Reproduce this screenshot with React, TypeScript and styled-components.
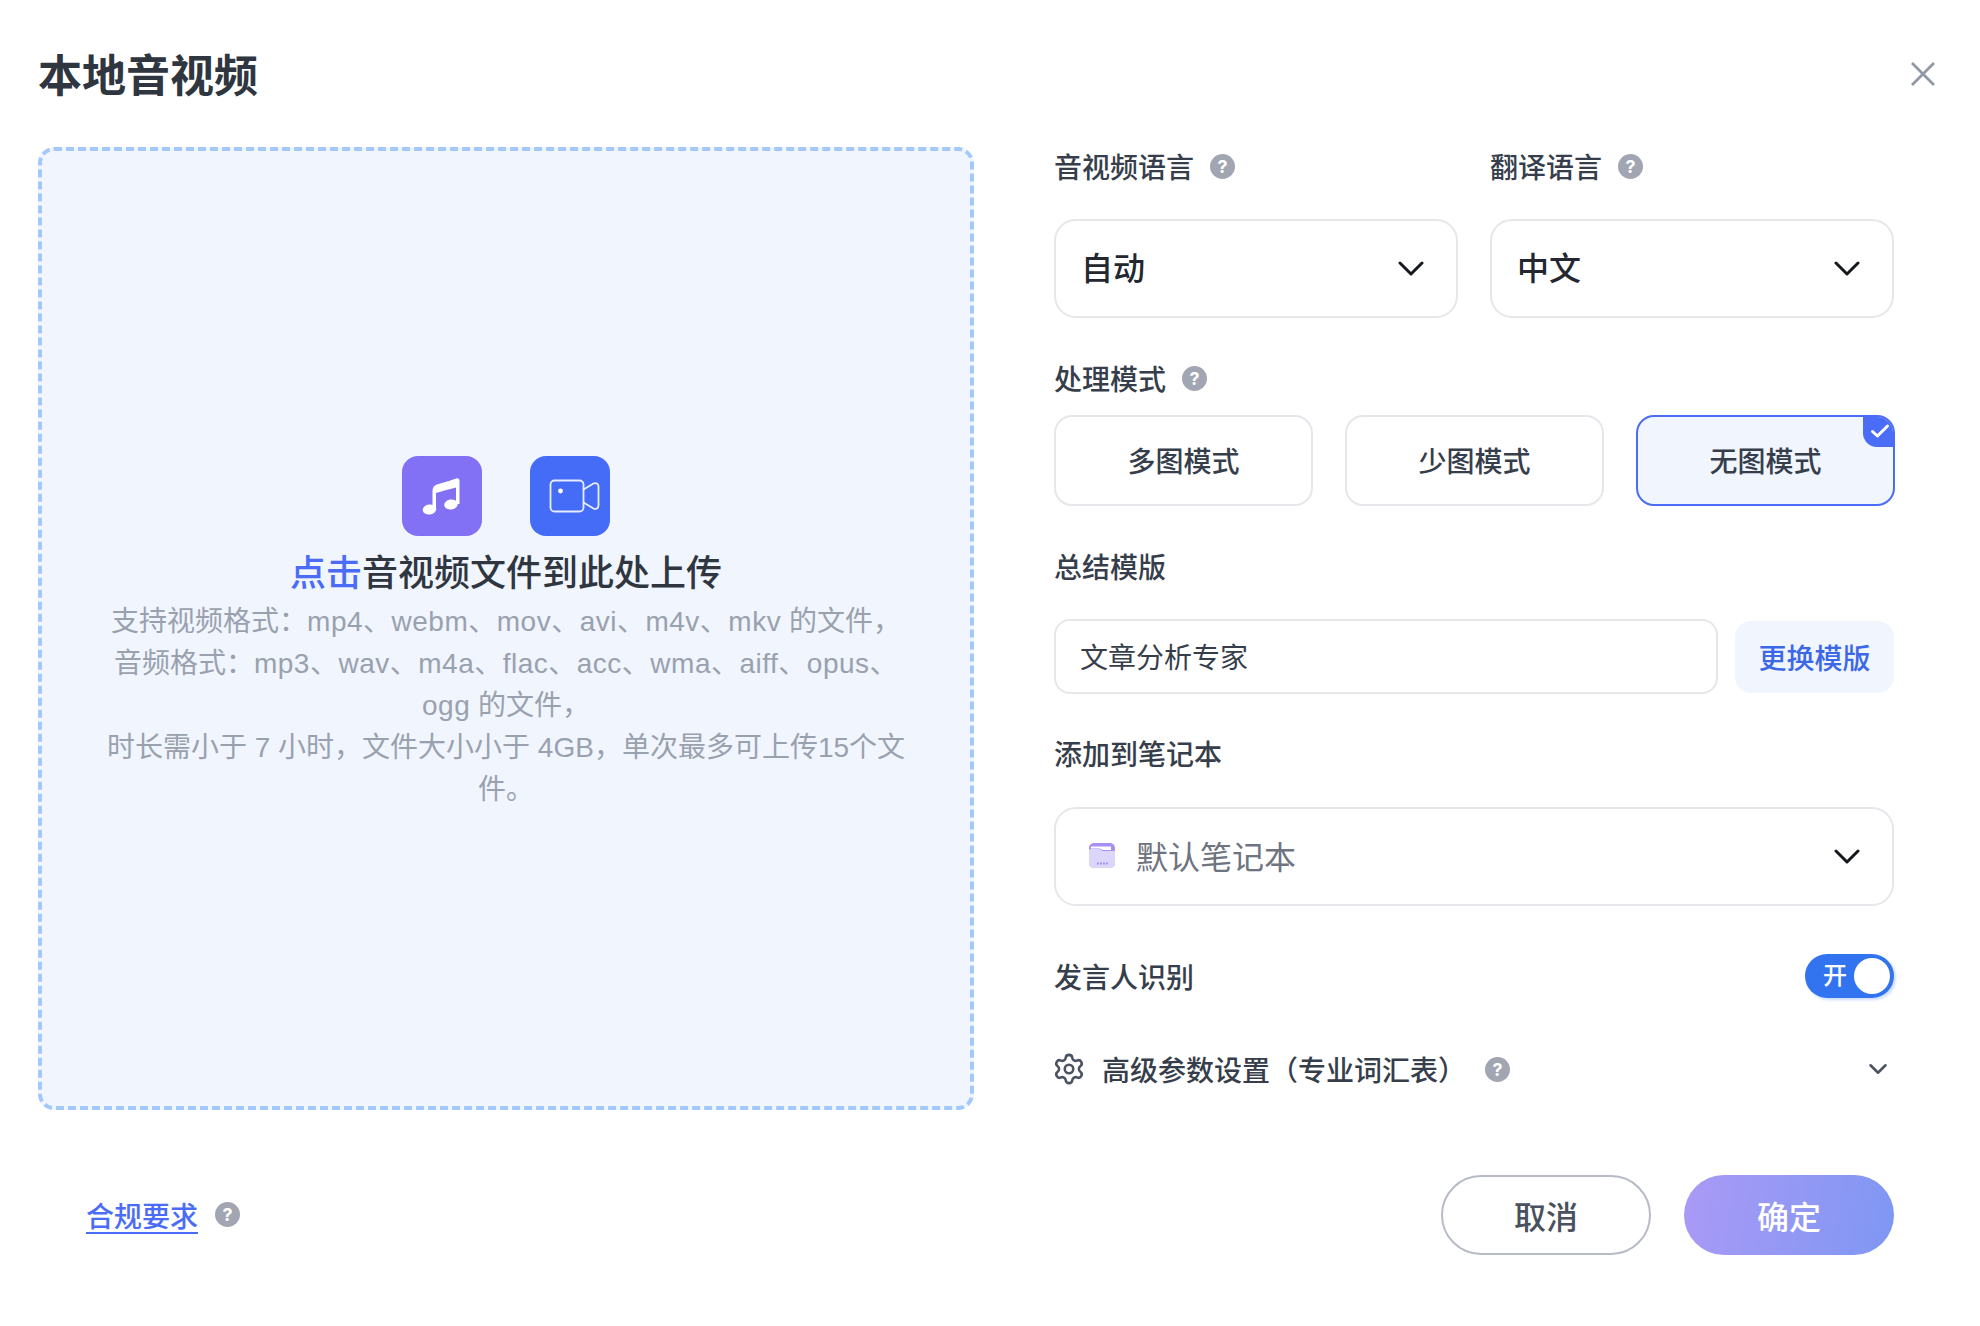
import styled, { createGlobalStyle } from "styled-components";
import { ChevronDown, Settings } from "lucide-react";

const GlobalStyle = createGlobalStyle`
  html, body {
    margin: 0;
    padding: 0;
    background: #fff;
  }
  body {
    font-family: Inter, "Noto Sans CJK SC", sans-serif;
    color: #2f3542;
  }
  * {
    box-sizing: border-box;
  }
`;

const Page = styled.div`
  width: 1980px;
  height: 1326px;
  padding-left: 38px;
  overflow: hidden;
`;

const Header = styled.div`
  height: 147px;
  padding: 0 44px 0 0;
  display: flex;
  justify-content: space-between;
  align-items: center;
`;

const Title = styled.h1`
  margin: 5px 0 0;
  font-size: 44px;
  font-weight: 700;
  line-height: 60px;
  color: #2f3640;
`;

const CloseIcon = styled.svg`
  width: 26px;
  height: 26px;
  margin-top: 1px;
  stroke: #9198a5;
  stroke-width: 2.8;
  fill: none;
`;

const Body = styled.div`
  display: flex;
  width: 1856px;
  gap: 80px;
`;

const DropZone = styled.div`
  width: 936px;
  height: 963px;
  border: 4px dashed #a3c9fb;
  border-radius: 16px;
  background: #f0f5fe;
  padding-top: 305px;
  display: flex;
  flex-direction: column;
  align-items: center;
`;

const UploadIcons = styled.div`
  display: flex;
  gap: 48px;
`;

const UploadIcon = styled.div<{ $bg: string }>`
  width: 80px;
  height: 80px;
  border-radius: 16px;
  background: ${(p) => p.$bg};
`;

const Headline = styled.div`
  font-size: 36px;
  font-weight: 500;
  line-height: 50px;
  margin-top: 12px;
  color: #2f3640;
`;

const Accent = styled.span`
  color: #4a6cf7;
`;

const Hint = styled.div`
  margin-top: 3px;
  font-family: "Liberation Sans", "Noto Sans CJK SC", sans-serif;
  font-size: 28px;
  line-height: 42px;
  color: #9aa1ae;
  text-align: center;
  width: 808px;
`;

const Formats = styled.span`
  letter-spacing: 0.5px;
`;

const Side = styled.div`
  width: 840px;
  display: flex;
  flex-direction: column;
`;

const Columns = styled.div`
  display: grid;
  grid-template-columns: 404px 404px;
  gap: 32px;
`;

const Label = styled.div<{ $top?: number; $bottom?: number }>`
  display: flex;
  align-items: center;
  height: 38px;
  font-size: 28px;
  font-weight: 500;
  color: #373e4b;
  margin-top: ${(p) => p.$top ?? 0}px;
  margin-bottom: ${(p) => p.$bottom ?? 0}px;
`;

const Help = styled.span<{ $gap?: number }>`
  width: 25px;
  height: 25px;
  margin-left: ${(p) => p.$gap ?? 16}px;
  border-radius: 50%;
  background: #a2a6b2;
  color: #fff;
  font-size: 18px;
  font-weight: 700;
  line-height: 25px;
  text-align: center;
  flex: none;
`;

const Select = styled.div`
  height: 99px;
  border: 2.5px solid #e6e7eb;
  border-radius: 22px;
  padding: 0 25px;
  display: flex;
  align-items: center;
  justify-content: space-between;
  font-size: 32px;
  font-weight: 500;
  color: #23272f;
  background: #fff;
`;

const SelectValue = styled.span`
  margin-bottom: 5px;
`;

const ChevronIcon = styled.svg`
  width: 26px;
  height: 15px;
  margin-right: 7px;
  fill: none;
  stroke: #15181d;
  stroke-width: 3;
  stroke-linecap: round;
  stroke-linejoin: round;
`;

const Chevron = () => (
  <ChevronIcon viewBox="0 0 26 15">
    <path d="M2 2 13 13 24 2" />
  </ChevronIcon>
);

const ModeRow = styled.div`
  display: grid;
  grid-template-columns: repeat(3, 259px);
  gap: 32px;
`;

const ModeCard = styled.div<{ $active?: boolean }>`
  position: relative;
  height: 91px;
  padding-bottom: 2px;
  border: 2.5px solid ${(p) => (p.$active ? "#4a6cf7" : "#e6e7eb")};
  border-radius: 18px;
  background: ${(p) => (p.$active ? "#f0f5fe" : "#fff")};
  font-size: 28px;
  font-weight: 500;
  color: #373e4b;
  display: flex;
  align-items: center;
  justify-content: center;
  overflow: hidden;
`;

const CheckBadge = styled.span`
  position: absolute;
  top: -3px;
  right: -3px;
  width: 33px;
  height: 33px;
  background: #4a6cf7;
  border-bottom-left-radius: 14px;
  display: flex;
  align-items: center;
  justify-content: center;
`;

const TemplateRow = styled.div`
  display: flex;
  align-items: center;
  gap: 17px;
`;

const TemplateInput = styled.div`
  width: 664px;
  height: 75px;
  border: 2.5px solid #e6e7eb;
  border-radius: 16px;
  padding: 0 24px 2px;
  display: flex;
  align-items: center;
  font-size: 28px;
  color: #373e4b;
`;

const TemplateButton = styled.div`
  width: 159px;
  height: 72px;
  border-radius: 16px;
  background: #f0f5fe;
  color: #3c68e8;
  font-size: 28px;
  font-weight: 500;
  display: flex;
  align-items: center;
  justify-content: center;
`;

const NotebookName = styled.div`
  display: flex;
  align-items: center;
  gap: 20px;
  color: #6e7480;
  font-weight: 400;
  margin: 0 0 3px 7px;
`;

const SpeakerRow = styled.div`
  display: flex;
  align-items: center;
  justify-content: space-between;
  height: 44px;
  margin-top: 48px;
  font-size: 28px;
  font-weight: 500;
  color: #373e4b;
`;

const Toggle = styled.div`
  position: relative;
  width: 89px;
  height: 44px;
  border-radius: 22px;
  background: #3274f0;
  color: #fff;
  font-size: 24px;
  line-height: 44px;
  padding-left: 18px;
  box-shadow: 2px 2px 3px rgba(50, 116, 240, 0.25);
`;

const Knob = styled.span`
  position: absolute;
  top: 4px;
  right: 4px;
  width: 36px;
  height: 36px;
  border-radius: 50%;
  background: #fff;
`;

const AdvancedRow = styled.div`
  display: flex;
  align-items: center;
  height: 38px;
  margin-top: 52px;
  font-size: 28px;
  font-weight: 500;
  color: #373e4b;
`;

const Gear = styled(Settings)`
  width: 34px;
  height: 34px;
  margin: 0 16px 0 -2px;
  color: #4b5362;
  stroke-width: 1.8;
`;

const SmallChevron = styled(ChevronDown)`
  width: 30px;
  height: 30px;
  margin-left: auto;
  margin-right: 1px;
  color: #4b5362;
  stroke-width: 2;
`;

const Footer = styled.div`
  width: 1856px;
  margin-top: 64px;
  padding-left: 48px;
  display: flex;
  align-items: center;
  height: 81px;
`;

const ComplianceLink = styled.a`
  font-size: 28px;
  font-weight: 500;
  color: #4a6cf7;
  text-decoration: underline;
  text-underline-offset: 5px;
`;

const Actions = styled.div`
  margin-left: auto;
  display: flex;
  gap: 33px;
`;

const PillButton = styled.div<{ $primary?: boolean }>`
  width: 210px;
  height: 80px;
  border-radius: 40px;
  border: ${(p) => (p.$primary ? "none" : "2.5px solid #b6bbc6")};
  background: ${(p) =>
    p.$primary ? "linear-gradient(100deg, #aa9af6, #7e97f3)" : "#fff"};
  color: ${(p) => (p.$primary ? "#fff" : "#4a515e")};
  font-size: 32px;
  font-weight: 500;
  display: flex;
  align-items: center;
  justify-content: center;
`;

const App = () => {
  return (
    <Page>
      <GlobalStyle />
      <Header>
        <Title>本地音视频</Title>
        <CloseIcon viewBox="0 0 26 26">
          <path d="M2 2 24 24M24 2 2 24" />
        </CloseIcon>
      </Header>
      <Body>
        <DropZone>
          <UploadIcons>
            <UploadIcon $bg="#8270f5">
              <svg width="80" height="80" viewBox="0 0 80 80" fill="#fff">
                <path d="M30.500 53V35c0-3.500 1.500-5.500 4.500-6.500 5-1.500 11-3 19-6 2-.7 3.500.3 3.500 2.500V48h-3.500V31.500c-6 1.500-13 3.500-20 5.500V53z" />
                <ellipse cx="27.500" cy="53.500" rx="6.800" ry="5" transform="rotate(-10 27.500 53.500)" />
                <ellipse cx="49" cy="48.500" rx="6.800" ry="5" transform="rotate(-10 49 48.500)" />
              </svg>
            </UploadIcon>
            <UploadIcon $bg="#456cf6">
              <svg width="80" height="80" viewBox="0 0 80 80" fill="none" stroke="#fff" strokeWidth="1.800" strokeOpacity="0.88" strokeLinejoin="round">
                <rect x="20.500" y="24.500" width="33" height="31" rx="4" />
                <path d="M53.500 33.500 63.500 27.500c2.500-1.200 5 .2 5 3v19c0 2.800-2.500 4.200-5 3L53.500 46.500" />
                <circle cx="30.500" cy="35" r="2.400" fill="#fff" stroke="none" />
              </svg>
            </UploadIcon>
          </UploadIcons>
          <Headline>
            <Accent>点击</Accent>音视频文件到此处上传
          </Headline>
          <Hint>
            支持视频格式：<Formats>mp4、webm、mov、avi、m4v、mkv</Formats> 的文件，
            <br />
            音频格式：<Formats>mp3、wav、m4a、flac、acc、wma、aiff、opus、ogg</Formats> 的文件，
            <br />
            时长需小于 7 小时，文件大小小于 4GB，单次最多可上传15个文件。
          </Hint>
        </DropZone>
        <Side>
          <Columns>
            <Label $bottom={34}>
              音视频语言
              <Help>?</Help>
            </Label>
            <Label $bottom={34}>
              翻译语言
              <Help>?</Help>
            </Label>
          </Columns>
          <Columns>
            <Select>
              <SelectValue>自动</SelectValue>
              <Chevron />
            </Select>
            <Select>
              <SelectValue>中文</SelectValue>
              <Chevron />
            </Select>
          </Columns>
          <Label $top={41} $bottom={18}>
            处理模式
            <Help>?</Help>
          </Label>
          <ModeRow>
            <ModeCard>多图模式</ModeCard>
            <ModeCard>少图模式</ModeCard>
            <ModeCard $active>
              无图模式
              <CheckBadge>
                <svg width="20" height="16" viewBox="0 0 20 16" fill="none" stroke="#fff" strokeWidth="3" strokeLinecap="round" strokeLinejoin="round">
                  <path d="M2.500 8.500 7.500 13 17.500 3" />
                </svg>
              </CheckBadge>
            </ModeCard>
          </ModeRow>
          <Label $top={41} $bottom={34}>
            总结模版
          </Label>
          <TemplateRow>
            <TemplateInput>文章分析专家</TemplateInput>
            <TemplateButton>更换模版</TemplateButton>
          </TemplateRow>
          <Label $top={40} $bottom={35}>
            添加到笔记本
          </Label>
          <Select>
            <NotebookName>
              <svg width="28" height="30" viewBox="0 0 28 30">
                <rect x="1" y="3" width="26" height="25" rx="5" fill="#a78ff5" />
                <path d="M1 11c0-1.500 1-2 2-2h8c2 0 2.500 2 4.500 2H27v12c0 3-2 5-5 5H6c-3 0-5-2-5-5z" fill="#dcd6fb" />
                <path d="M3 6.500h20V10H15.500c-2 0-2.500-1.500-4-1.500H3z" fill="#fff" />
                <path d="M9 23.500h11" stroke="#a78ff5" strokeWidth="2" strokeDasharray="2 1" />
              </svg>
              默认笔记本
            </NotebookName>
            <Chevron />
          </Select>
          <SpeakerRow>
            发言人识别
            <Toggle>
              开
              <Knob />
            </Toggle>
          </SpeakerRow>
          <AdvancedRow>
            <Gear />
            高级参数设置（专业词汇表）
            <Help $gap={19}>?</Help>
            <SmallChevron />
          </AdvancedRow>
        </Side>
      </Body>
      <Footer>
        <ComplianceLink>合规要求</ComplianceLink>
        <Help $gap={17}>?</Help>
        <Actions>
          <PillButton>取消</PillButton>
          <PillButton $primary>确定</PillButton>
        </Actions>
      </Footer>
    </Page>
  );
};

export default App;
